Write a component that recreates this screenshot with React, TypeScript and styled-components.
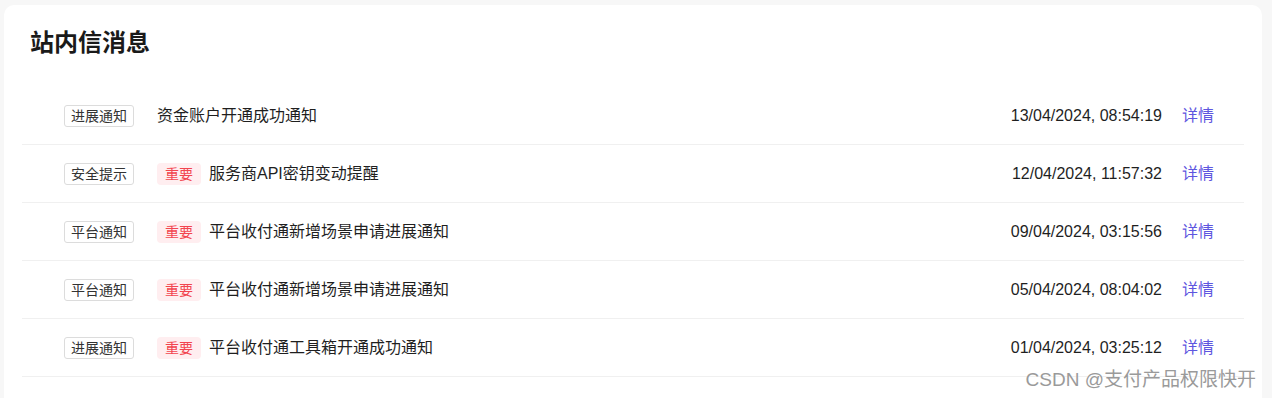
import React from 'react';
import styled, { createGlobalStyle } from 'styled-components';

interface Message {
  id: number;
  category: string;
  important?: boolean;
  title: string;
  time: string;
}

const messages: Message[] = [
  { id: 1, category: '进展通知', title: '资金账户开通成功通知', time: '13/04/2024, 08:54:19' },
  { id: 2, category: '安全提示', important: true, title: '服务商API密钥变动提醒', time: '12/04/2024, 11:57:32' },
  { id: 3, category: '平台通知', important: true, title: '平台收付通新增场景申请进展通知', time: '09/04/2024, 03:15:56' },
  { id: 4, category: '平台通知', important: true, title: '平台收付通新增场景申请进展通知', time: '05/04/2024, 08:04:02' },
  { id: 5, category: '进展通知', important: true, title: '平台收付通工具箱开通成功通知', time: '01/04/2024, 03:25:12' }
];

const GlobalStyle = createGlobalStyle`
  html, body {
    margin: 0;
    padding: 0;
    background: #f7f7f7;
    overflow: hidden;
  }
  body {
    font-family: "Liberation Sans", "Noto Sans CJK SC", sans-serif;
    color: #1f1f1f;
  }
`;

function App() {
  return (
    <Page>
      <GlobalStyle />
      <Card>
        <Title>站内信消息</Title>
        <List>
          {messages.map((msg) => (
            <Row key={msg.id}>
              <TagCategory>{msg.category}</TagCategory>
              <ContainerTitle>
                {msg.important && <TagImportant>重要</TagImportant>}
                <TextTitle>{msg.title}</TextTitle>
              </ContainerTitle>
              <TextTime>{msg.time}</TextTime>
              <LinkDetail>详情</LinkDetail>
            </Row>
          ))}
        </List>
      </Card>
      <Watermark>CSDN @支付产品权限快开</Watermark>
    </Page>
  );
}

const Page = styled.div`
  position: relative;
  height: 398px;
  overflow: hidden;
  padding: 5px 10px 0 4px;
  box-sizing: border-box;
`;

const Card = styled.section`
  background: #fff;
  border-radius: 10px;
  padding: 22px 18px 40px;
`;

const Title = styled.h2`
  margin: 0 0 28px;
  padding-left: 8px;
  font-size: 24px;
  line-height: 32px;
  font-weight: bold;
  color: #1a1a1a;
`;

const List = styled.ul`
  list-style: none;
  margin: 0;
  padding: 0;
`;

const Row = styled.li`
  display: flex;
  align-items: center;
  height: 57px;
  padding: 0 30px 0 42px;
  border-bottom: 1px solid #f0f0f0;
  line-height: 22px;
`;

const TagCategory = styled.span`
  flex-shrink: 0;
  padding: 0 6px;
  height: 20px;
  line-height: 20px;
  font-size: 14px;
  color: #333;
  border: 1px solid #dcdcdc;
  border-radius: 3px;
  margin-right: 23px;
`;

const ContainerTitle = styled.div`
  flex: 1;
  display: flex;
  align-items: center;
  gap: 8px;
`;

const TagImportant = styled.span`
  padding: 0 8px;
  height: 22px;
  line-height: 22px;
  font-size: 14px;
  color: #f2454f;
  background: #ffeef0;
  border-radius: 4px;
`;

const TextTitle = styled.span`
  font-size: 16px;
  color: #1f1f1f;
  margin-top: 1px;
`;

const TextTime = styled.span`
  font-size: 16px;
  color: #1f1f1f;
  margin-right: 20px;
`;

const LinkDetail = styled.a`
  font-size: 16px;
  color: #5e56e0;
  cursor: pointer;
  margin-top: 1px;
`;

const Watermark = styled.div`
  position: absolute;
  right: 16px;
  bottom: 5px;
  font-size: 19px;
  line-height: 26px;
  color: #9a9a9a;
  text-shadow: 0 0 2px #fff;
`;

export default App;
